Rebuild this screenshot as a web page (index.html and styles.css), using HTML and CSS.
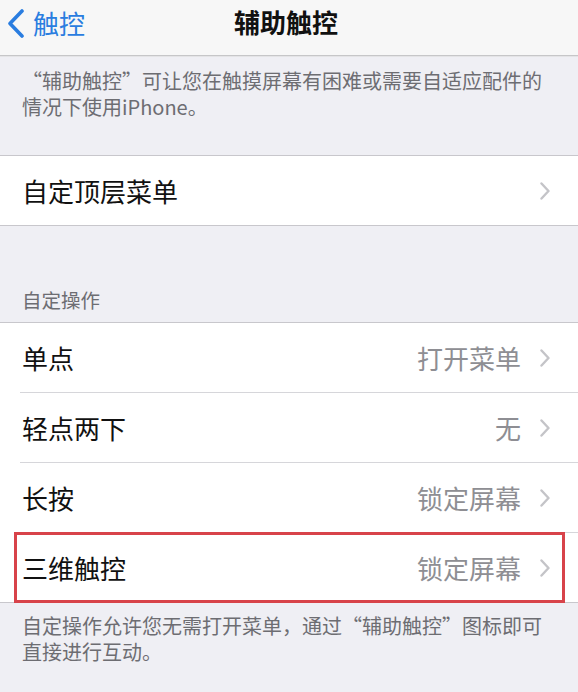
FILE: index.html
```html
<!DOCTYPE html>
<html lang="zh-CN">
<head>
<meta charset="utf-8">
<title>辅助触控</title>
<link rel="stylesheet" href="styles.css">
</head>
<body>
<div class="nav">
  <div class="back">
    <svg class="back-icon" width="20" height="30" viewBox="0 0 20 30"><path d="M15 3 L3 15.5 L15 28" fill="none" stroke="#2a7de0" stroke-width="3.6" stroke-linecap="round" stroke-linejoin="round"/></svg>
    <span class="back-text">触控</span>
  </div>
  <div class="title">辅助触控</div>
  <div class="spacer"></div>
</div>

<p class="desc desc-top">“辅助触控”可让您在触摸屏幕有困难或需要自适应配件的情况下使用iPhone。</p>

<div class="group group-first">
  <div class="row row-last">
    <span class="label">自定顶层菜单</span>
    <svg class="chev" width="10" height="18" viewBox="0 0 10 18"><path d="M1.5 1.5 L8.5 9 L1.5 16.5" fill="none" stroke="#c4c4c8" stroke-width="2.4" stroke-linecap="round" stroke-linejoin="round"/></svg>
  </div>
</div>

<div class="header">自定操作</div>

<div class="group">
  <div class="row">
    <span class="label">单点</span>
    <span class="value">打开菜单</span>
    <svg class="chev" width="10" height="18" viewBox="0 0 10 18"><path d="M1.5 1.5 L8.5 9 L1.5 16.5" fill="none" stroke="#c4c4c8" stroke-width="2.4" stroke-linecap="round" stroke-linejoin="round"/></svg>
  </div>
  <div class="row">
    <span class="label">轻点两下</span>
    <span class="value">无</span>
    <svg class="chev" width="10" height="18" viewBox="0 0 10 18"><path d="M1.5 1.5 L8.5 9 L1.5 16.5" fill="none" stroke="#c4c4c8" stroke-width="2.4" stroke-linecap="round" stroke-linejoin="round"/></svg>
  </div>
  <div class="row">
    <span class="label">长按</span>
    <span class="value">锁定屏幕</span>
    <svg class="chev" width="10" height="18" viewBox="0 0 10 18"><path d="M1.5 1.5 L8.5 9 L1.5 16.5" fill="none" stroke="#c4c4c8" stroke-width="2.4" stroke-linecap="round" stroke-linejoin="round"/></svg>
  </div>
  <div class="row row-last highlight">
    <span class="label">三维触控</span>
    <span class="value">锁定屏幕</span>
    <svg class="chev" width="10" height="18" viewBox="0 0 10 18"><path d="M1.5 1.5 L8.5 9 L1.5 16.5" fill="none" stroke="#c4c4c8" stroke-width="2.4" stroke-linecap="round" stroke-linejoin="round"/></svg>
  </div>
</div>

<p class="desc desc-bottom">自定操作允许您无需打开菜单，通过“辅助触控”图标即可直接进行互动。</p>
</body>
</html>
```

FILE: styles.css
```css
html, body {
  margin: 0;
  padding: 0;
}
body {
  background: #efeff4;
  font-family: "Noto Sans CJK SC", "Noto Sans", sans-serif;
  color: #111;
  width: 578px;
  height: 692px;
  overflow: hidden;
}
.nav {
  height: 55px;
  background: #f7f7f7;
  border-bottom: 1px solid #c6c6c8;
  display: grid;
  grid-template-columns: 1fr auto 1fr;
  align-items: center;
  box-shadow: 0 1px 0 #e4e4e6;
}
.back {
  display: flex;
  align-items: center;
  padding-left: 7px;
  margin-top: -10px;
}
.back-icon {
  display: block;
}
.back-text {
  color: #2a7de0;
  font-size: 26px;
  line-height: 34px;
  margin-left: 6px;
}
.title {
  font-size: 26px;
  font-weight: 700;
  line-height: 34px;
  color: #111;
  margin-top: -12px;
  margin-left: -6px;
}
.desc {
  margin: 0;
  color: #6d6d72;
  font-size: 20px;
  line-height: 26px;
  padding: 0 18px 0 22px;
}
.desc-top {
  padding-top: 12px;
}
.group {
  background: #fff;
  border-top: 1px solid #c8c7cc;
  border-bottom: 1px solid #c8c7cc;
}
.group-first {
  margin-top: 35px;
}
.row {
  height: 69px;
  margin-left: 20px;
  padding: 0 28px 0 2px;
  display: flex;
  align-items: center;
  border-bottom: 1px solid #d6d6da;
}
.row-last {
  border-bottom: none;
}
.label {
  flex: 1;
  font-size: 26px;
  line-height: 34px;
  color: #111;
}
.value {
  font-size: 26px;
  line-height: 34px;
  color: #8e8e93;
  margin-right: 19px;
}
.chev {
  display: block;
}
.header {
  color: #6d6d72;
  font-size: 19.5px;
  line-height: 26px;
  padding: 61px 22px 9px;
}
.highlight {
  position: relative;
}
.highlight::after {
  content: "";
  position: absolute;
  left: -6px;
  right: 13px;
  top: -1px;
  bottom: -1px;
  border: 3px solid #d8434a;
  pointer-events: none;
}
.desc-bottom {
  padding-top: 10px;
}
```
